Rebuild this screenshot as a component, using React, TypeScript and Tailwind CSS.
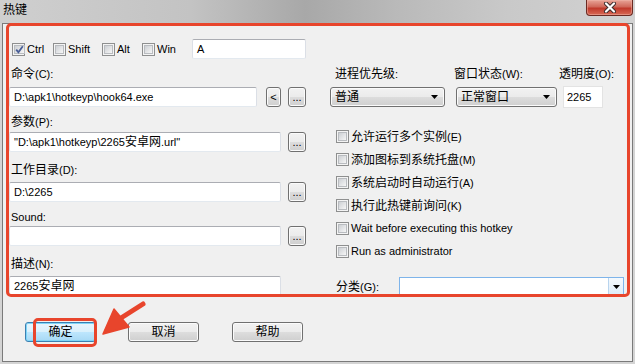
import React from 'react';

const font = "font-['Liberation_Sans','Noto_Sans_CJK_SC',sans-serif]";

// CJK runs get 12px, Latin stays at 11px like the Win7 dialog font
const T = ({ s }: { s: string }) => (
  <>
    {s.split(/([\u3000-\u9fff\uff00-\uffef]+)/).map((p, i) =>
      i % 2 ? (
        <span key={i} className="text-[12px]">
          {p}
        </span>
      ) : (
        p
      )
    )}
  </>
);

const Check = ({ checked = false }: { checked?: boolean }) => (
  <span className="w-[13px] h-[13px] border border-[#8e8f8f] bg-[#f4f4f4] p-[1px] flex shrink-0">
    <span className="flex-1 border border-[#b9bcc0] bg-[linear-gradient(135deg,#cdd0d4,#f6f6f6)] flex items-center justify-center">
      {checked && (
        <svg width="9" height="9" viewBox="0 0 9 9" className="shrink-0">
          <path d="M1.2 4.6 L3.4 7.2 L7.8 1.2" fill="none" stroke="#4a5f97" strokeWidth="1.8" />
        </svg>
      )}
    </span>
  </span>
);

const CheckItem = ({ label, checked, w }: { label: string; checked?: boolean; w: string }) => (
  <div className={`flex items-center gap-[2px] ${w}`}>
    <Check checked={checked} />
    <span className="leading-none whitespace-nowrap">
      <T s={label} />
    </span>
  </div>
);

const TextBox = ({ value = '', w }: { value?: string; w: string }) => (
  <div
    className={`${w} h-[20px] bg-white border border-[#abadb3] border-l-[#dbdfe6] border-r-[#dbdfe6] border-b-[#e3e9ef] rounded-[2px] flex items-center pl-[4px] whitespace-nowrap overflow-hidden leading-none`}
  >
    <T s={value} />
  </div>
);

const btnBg =
  'border border-[#707070] rounded-[3px] bg-[linear-gradient(#f2f2f2_0%,#ebebeb_50%,#dddddd_50%,#cfcfcf_100%)] shadow-[inset_0_0_0_1px_#fbfbfb]';

const SmallBtn = ({ label, w, ml }: { label: string; w: string; ml: string }) => (
  <div className={`${w} ${ml} h-[20px] ${btnBg} flex items-center justify-center leading-none`}>{label}</div>
);

const Arrow = () => (
  <svg width="7" height="4" viewBox="0 0 7 4" className="shrink-0">
    <path d="M0 0 H7 L3.5 4 Z" fill="#000" />
  </svg>
);

const DropList = ({ value, w }: { value: string; w: string }) => (
  <div className={`${w} h-[20px] ${btnBg} flex items-center justify-between pl-[4px] pr-[6px] leading-none`}>
    <span>
      <T s={value} />
    </span>
    <Arrow />
  </div>
);

const Field = ({ label, mt, children }: { label: string; mt: string; children: React.ReactNode }) => (
  <>
    <div className={`leading-[14px] h-[14px] pl-[2px] ${mt}`}>
      <T s={label} />
    </div>
    {children}
  </>
);

const DlgButton = ({ label, focused }: { label: string; focused?: boolean }) => (
  <div
    className={`w-[71px] h-[20px] rounded-[3px] border flex items-center justify-center leading-none ${
      focused
        ? 'border-[#3c7fb1] bg-[linear-gradient(#eaf6fd_0%,#d9f0fc_50%,#bee6fd_50%,#a7d9f5_100%)] shadow-[inset_0_0_0_1px_#7fd6f8]'
        : 'border-[#707070] bg-[linear-gradient(#f2f2f2_0%,#ebebeb_50%,#dddddd_50%,#cfcfcf_100%)] shadow-[inset_0_0_0_1px_#fbfbfb]'
    }`}
  >
    <T s={label} />
  </div>
);

export default function App() {
  return (
    <div className={`w-[635px] h-[364px] relative overflow-hidden bg-[#d4d4d4] text-[11px] text-black ${font}`}>
      {/* title bar */}
      <div className="h-[23px] flex justify-between bg-[linear-gradient(90deg,#cfcfcf_0%,#c3c3c3_30%,#a8a8a8_48%,#b9b9b9_62%,#c9c9c9_80%,#d2d2d2_100%)]">
        <div className="pl-[3px] pt-[3px] leading-[14px]">
          <T s="热键" />
        </div>
        <div className="w-[47px] h-[16px] mr-[2px] rounded-b-[4px] border border-t-0 border-[#6b2a22] bg-[linear-gradient(#e8a497_0%,#d0685a_45%,#c0392b_55%,#d86a55_100%)] shadow-[inset_0_0_0_1px_#f0b6aa80] flex items-center justify-center">
          <svg width="14" height="11" viewBox="0 0 14 11">
            <path d="M3 1.5 L11 9.5 M11 1.5 L3 9.5" stroke="#3a2a2a" strokeWidth="4" strokeLinecap="round" />
            <path d="M3 1.5 L11 9.5 M11 1.5 L3 9.5" stroke="#ffffff" strokeWidth="2.2" strokeLinecap="round" />
          </svg>
        </div>
      </div>

      {/* client area */}
      <div className="mx-[2px] h-[339px] border border-[#7a7a7a] bg-[#f0f0f0] flex flex-col">
        <div className="flex pt-[15px] pl-[6px]">
          {/* left column */}
          <div className="w-[297px] flex flex-col">
            <div className="h-[20px] flex items-center pl-[3px]">
              <CheckItem label="Ctrl" checked w="w-[41px]" />
              <CheckItem label="Shift" w="w-[49px]" />
              <CheckItem label="Alt" w="w-[40px]" />
              <CheckItem label="Win" w="w-[50px]" />
              <TextBox value="A" w="w-[114px]" />
            </div>
            <Field label="命令(C):" mt="mt-[8px]">
              <div className="flex mt-[6px]">
                <TextBox value="D:\apk1\hotkeyp\hook64.exe" w="w-[248px]" />
                <SmallBtn label="<" w="w-[15px]" ml="ml-[9px]" />
                <SmallBtn label="..." w="w-[18px]" ml="ml-[7px]" />
              </div>
            </Field>
            <Field label="参数(P):" mt="mt-[8px]">
              <div className="flex mt-[3px]">
                <TextBox value={'"D:\\apk1\\hotkeyp\\2265安卓网.url"'} w="w-[272px]" />
                <SmallBtn label="..." w="w-[18px]" ml="ml-[7px]" />
              </div>
            </Field>
            <Field label="工作目录(D):" mt="mt-[11px]">
              <div className="flex mt-[5px]">
                <TextBox value="D:\2265" w="w-[272px]" />
                <SmallBtn label="..." w="w-[18px]" ml="ml-[7px]" />
              </div>
            </Field>
            <Field label="Sound:" mt="mt-[8px]">
              <div className="flex mt-[2px]">
                <TextBox w="w-[272px]" />
                <SmallBtn label="..." w="w-[18px]" ml="ml-[7px]" />
              </div>
            </Field>
            <Field label="描述(N):" mt="mt-[11px]">
              <div className="flex mt-[5px]">
                <TextBox value="2265安卓网" w="w-[272px]" />
              </div>
            </Field>
          </div>

          {/* right column */}
          <div className="w-[294px] ml-[24px] flex flex-col">
            <div className="flex mt-[28px]">
              <div className="w-[115px] flex flex-col">
                <div className="h-[14px] leading-[14px] pl-[5px] whitespace-nowrap">
                  <T s="进程优先级:" />
                </div>
                <div className="mt-[6px]">
                  <DropList value="普通" w="w-[115px]" />
                </div>
              </div>
              <div className="w-[101px] ml-[11px] flex flex-col">
                <div className="h-[14px] leading-[14px] -ml-[2px] whitespace-nowrap">
                  <T s="窗口状态(W):" />
                </div>
                <div className="mt-[6px]">
                  <DropList value="正常窗口" w="w-[101px]" />
                </div>
              </div>
              <div className="w-[40px] ml-[6px] flex flex-col">
                <div className="h-[14px] leading-[14px] -ml-[4px] whitespace-nowrap">
                  <T s="透明度(O):" />
                </div>
                <div className="mt-[5px]">
                  <div className="w-[40px] h-[22px] bg-white border border-[#e3e3e3] flex items-center pl-[3px] leading-none">
                    2265
                  </div>
                </div>
              </div>
            </div>
            <div className="flex flex-col mt-[17px] pl-[6px]">
              {[
                '允许运行多个实例(E)',
                '添加图标到系统托盘(M)',
                '系统启动时自动运行(A)',
                '执行此热键前询问(K)',
                'Wait before executing this hotkey',
                'Run as administrator',
              ].map((t) => (
                <div key={t} className="h-[23px] flex items-center">
                  <CheckItem label={t} w="w-auto" />
                </div>
              ))}
            </div>
            <div className="flex items-center mt-[14px] pl-[6px]">
              <div className="w-[63px] leading-none">
                <T s="分类(G):" />
              </div>
              <div className="w-[225px] h-[20px] bg-white border border-[#7eb4ea] flex justify-end">
                <div className="w-[15px] h-full border-l border-[#b8d4ee] bg-[linear-gradient(#f4f9fd,#dcebf8)] flex items-center justify-center">
                  <Arrow />
                </div>
              </div>
            </div>
          </div>
        </div>

        {/* bottom buttons */}
        <div className="flex mt-[25px] pl-[22px]">
          <DlgButton label="确定" focused />
          <div className="ml-[32px]">
            <DlgButton label="取消" />
          </div>
          <div className="ml-[33px]">
            <DlgButton label="帮助" />
          </div>
        </div>
      </div>

      {/* red annotations */}
      <div className="absolute left-[6px] top-[23px] w-[624px] h-[274px] border-[3px] border-[#e8452c] rounded-[5px] pointer-events-none" />
      <div className="absolute left-[33px] top-[318px] w-[64px] h-[29px] border-[3px] border-[#e8452c] rounded-[5px] pointer-events-none" />
      <svg className="absolute left-0 top-0 pointer-events-none" width="635" height="364" viewBox="0 0 635 364">
        <path d="M121 318 L143 304" stroke="#e8452c" strokeWidth="5" strokeLinecap="round" />
        <path d="M103 334 L114 309 L129 327 Z" fill="#e8452c" stroke="#e8452c" strokeWidth="1.5" strokeLinejoin="round" />
      </svg>
    </div>
  );
}
